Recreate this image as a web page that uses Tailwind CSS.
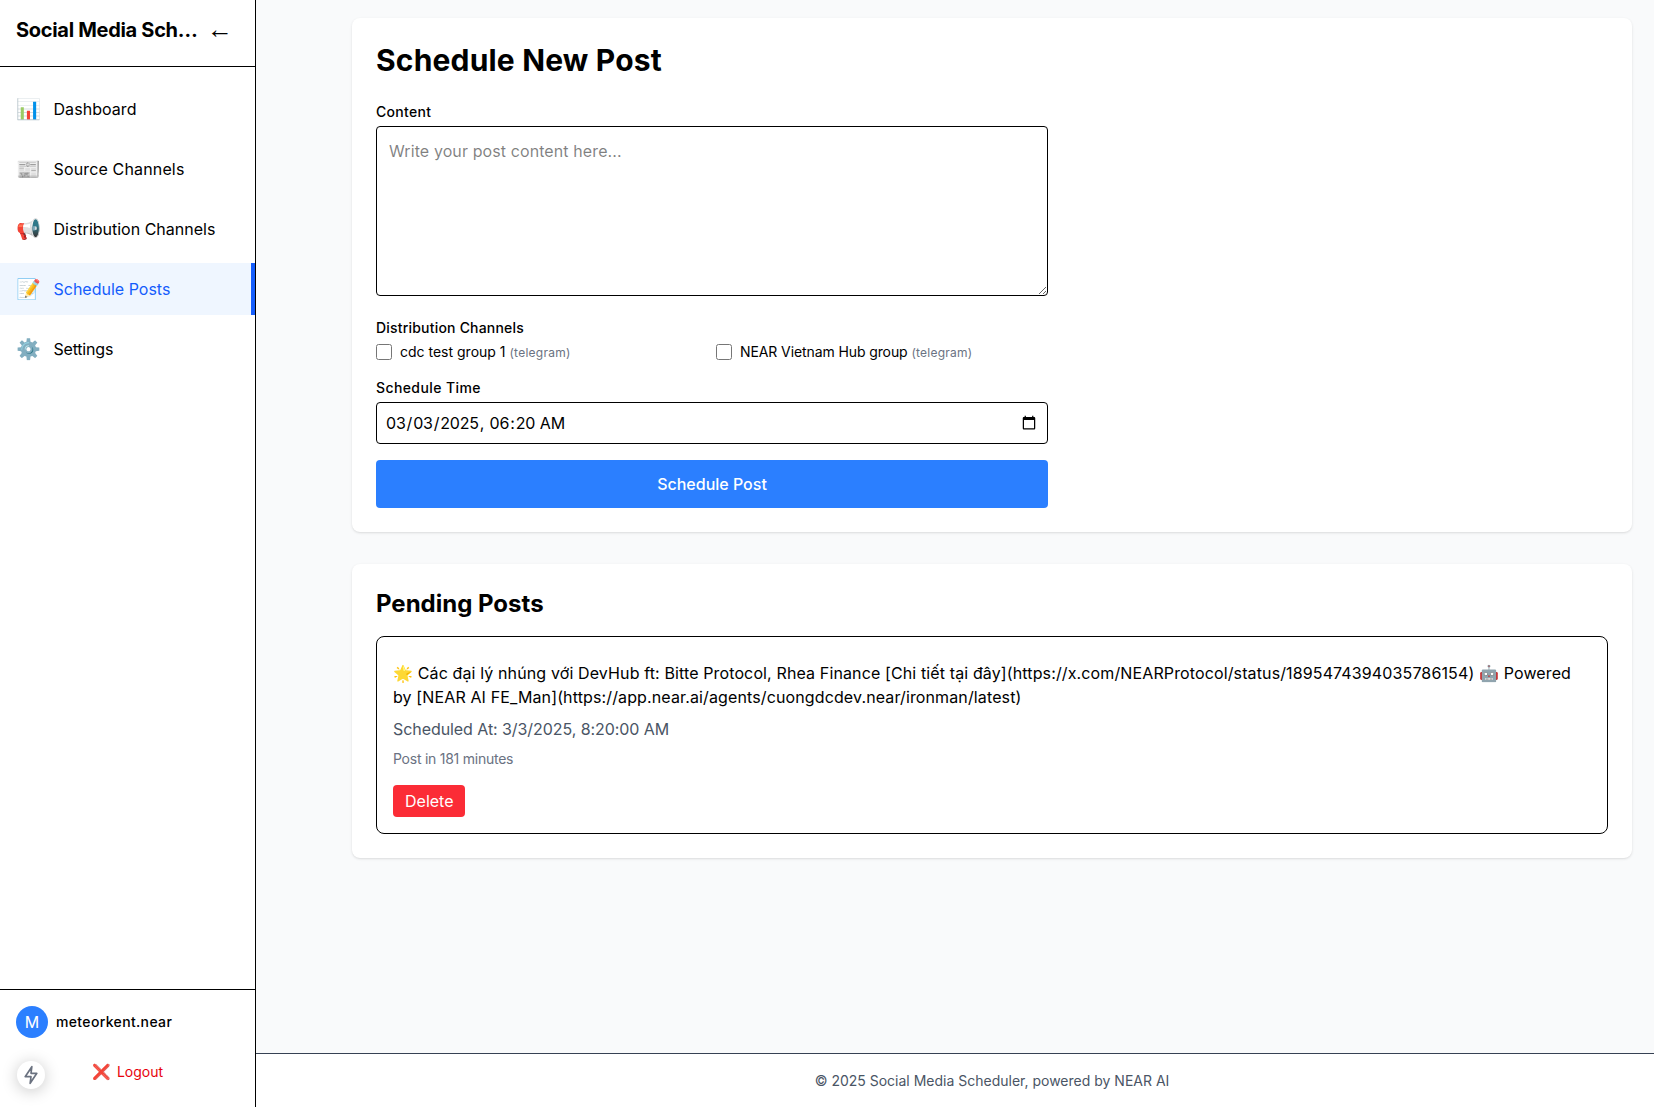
<!DOCTYPE html>
<html lang="en">
<head>
    <meta charset="UTF-8">
    <title>Social Media Scheduler</title>
    <script src="https://cdn.jsdelivr.net/npm/@tailwindcss/browser@4"></script>
</head>
<body class="bg-gray-50 font-['Inter',sans-serif] text-black h-[1107px] overflow-hidden">
<div class="flex h-[1107px]">
    <!-- Sidebar -->
    <aside class="relative flex flex-col w-[256px] shrink-0 bg-white border-r border-black">
        <div class="flex items-start justify-between h-[67px] pl-4 pr-[22px] pt-4 border-b border-black">
            <h1 class="text-xl font-bold truncate w-[186px] tracking-[-0.3px]">Social Media Scheduler</h1>
            <button class="text-[26px] leading-none font-['Liberation_Sans',sans-serif]">←</button>
        </div>
        <nav class="flex-1 pt-4">
            <a class="flex items-center h-[52px] mb-2 px-4">
                <span class="text-xl w-[37.5px]">📊</span><span class="tracking-[0.05px]">Dashboard</span>
            </a>
            <a class="flex items-center h-[52px] mb-2 px-4">
                <span class="text-xl w-[37.5px]">📰</span><span class="tracking-[0.15px]">Source Channels</span>
            </a>
            <a class="flex items-center h-[52px] mb-2 px-4">
                <span class="text-xl w-[37.5px]">📢</span><span>Distribution Channels</span>
            </a>
            <a class="flex items-center h-[52px] mb-2 px-4 bg-blue-50 text-blue-600 border-r-4 border-blue-600">
                <span class="text-xl w-[37.5px]">📝</span><span>Schedule Posts</span>
            </a>
            <a class="flex items-center h-[52px] mb-2 px-4">
                <span class="text-xl w-[37.5px]">⚙️</span><span class="tracking-[-0.2px]">Settings</span>
            </a>
        </nav>
        <div class="h-[118px] border-t border-black px-4 pt-4">
            <div class="flex items-center gap-2">
                <div class="flex items-center justify-center w-8 h-8 rounded-full bg-blue-500 text-white">M</div>
                <span class="text-sm font-medium tracking-[0.35px]">meteorkent.near</span>
            </div>
            <div class="flex items-center justify-center gap-1.5 mt-[23px] text-sm text-red-600">
                <span class="text-[15px]">❌</span><span>Logout</span>
            </div>
        </div>
        <button class="absolute left-[17px] bottom-[18px] flex items-center justify-center w-[28px] h-[28px] rounded-full bg-white shadow-[0_2px_16px_rgba(0,0,0,0.22)]">
            <svg width="20" height="20" viewBox="0 0 24 24" fill="none" stroke="#6b7280" stroke-width="2" stroke-linejoin="round"><path d="M13 2 5 14h7l-1 8 8-12h-7z"/></svg>
        </button>
    </aside>

    <!-- Main -->
    <div class="flex flex-col flex-1 min-w-0">
        <main class="flex-1 pl-24 pr-[22px] pt-[18px]">
            <section class="bg-white rounded-lg shadow-sm p-6 mb-8">
                <h2 class="text-3xl font-bold mb-6 tracking-[0.18px]">Schedule New Post</h2>
                <form class="w-[672px]">
                    <label class="block text-sm font-medium mb-1 tracking-[0.3px]">Content</label>
                    <textarea class="block w-full h-[170px] p-3 border border-black rounded tracking-[0.1px]" placeholder="Write your post content here..."></textarea>
                    <label class="block text-sm font-medium mt-[22px] tracking-[0.2px]">Distribution Channels</label>
                    <div class="grid grid-cols-2 gap-2 mt-1">
                        <label class="flex items-center gap-2 text-sm">
                            <input type="checkbox" class="w-4 h-4 m-0">
                            <span>cdc test group 1 <span class="text-xs text-gray-500 tracking-[0.25px]">(telegram)</span></span>
                        </label>
                        <label class="flex items-center gap-2 text-sm">
                            <input type="checkbox" class="w-4 h-4 m-0">
                            <span class="tracking-[-0.1px]">NEAR Vietnam Hub group <span class="text-xs text-gray-500 tracking-[0.25px]">(telegram)</span></span>
                        </label>
                    </div>
                    <label class="block text-sm font-medium mt-4 mb-1 tracking-[0.4px]">Schedule Time</label>
                    <input type="datetime-local" value="2025-03-03T06:20" class="block w-full h-[42px] px-2 border border-black rounded tracking-[-0.2px]">
                    <button type="button" class="block w-full h-12 mt-4 rounded bg-blue-500 text-white font-medium">Schedule Post</button>
                </form>
            </section>
            <section class="bg-white rounded-lg shadow-sm p-6">
                <h2 class="text-2xl font-bold mb-4">Pending Posts</h2>
                <div class="border border-black rounded-lg p-4">
                    <p class="mt-2 tracking-[0.125px]">🌟 Các đại lý nhúng với DevHub ft: Bitte Protocol, Rhea Finance [Chi tiết tại đây](https://x.com/NEARProtocol/status/1895474394035786154) 🤖 Powered by [NEAR AI FE_Man](https://app.near.ai/agents/cuongdcdev.near/ironman/latest)</p>
                    <p class="mt-2 text-gray-600 tracking-[-0.07px]">Scheduled At: 3/3/2025, 8:20:00 AM</p>
                    <p class="mt-2 text-sm text-gray-500 tracking-[-0.25px]">Post in 181 minutes</p>
                    <button class="mt-4 px-3 py-1 rounded bg-red-500 text-white">Delete</button>
                </div>
            </section>
        </main>
        <footer class="h-[54px] pl-24 pr-[22px] bg-white border-t border-gray-700 flex items-center justify-center text-sm text-gray-600">© 2025 Social Media Scheduler, powered by NEAR AI</footer>
    </div>
</div>
</body>
</html>
